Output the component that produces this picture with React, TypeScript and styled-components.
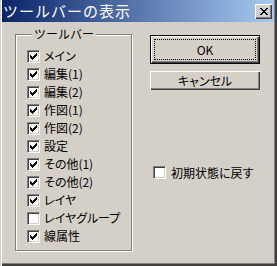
import React from 'react';
import styled, { createGlobalStyle } from 'styled-components';

const GlobalStyle = createGlobalStyle`
  html, body {
    margin: 0;
    padding: 0;
    background: #d4d0c8;
  }
  body {
    font-family: "Noto Sans CJK JP", "Noto Sans", sans-serif;
    font-size: 12px;
    color: #000;
  }
`;

const Window = styled.div`
  width: 277px;
  height: 266px;
  box-sizing: border-box;
  background: #d4d0c8;
  display: flex;
  flex-direction: column;
  box-shadow: inset 1px 0 0 #d4d0c8, inset 2px 0 0 #fff, inset -2px -2px 0 #404040,
    inset -3px -3px 0 #808080;
  overflow: hidden;
`;

const TitleBar = styled.div`
  height: 22px;
  margin: 0 3px 0 2px;
  display: flex;
  align-items: center;
  background: linear-gradient(90deg, #0a246a, #a6caf0);
`;

const TitleText = styled.span`
  flex: 1;
  padding-left: 1px;
  color: #fff;
  font-size: 15px;
  line-height: 22px;
  letter-spacing: 1px;
  white-space: nowrap;
`;

const CloseButton = styled.button`
  width: 17px;
  height: 15px;
  margin-right: 2px;
  padding: 0;
  border: none;
  background: #d4d0c8;
  display: flex;
  align-items: center;
  justify-content: center;
  box-shadow: inset 1px 1px 0 #fff, inset -1px -1px 0 #404040, inset -2px -2px 0 #808080;
`;

const Body = styled.div`
  display: flex;
  align-items: flex-start;
  padding: 5px 0 0 15px;
  gap: 18px;
`;

const Group = styled.fieldset`
  width: 117px;
  box-sizing: border-box;
  margin: 0;
  padding: 6px 0 5px 11px;
  border: 1px solid #808080;
  box-shadow: inset 1px 1px 0 #fff, 1px 1px 0 #fff;
`;

const Legend = styled.legend`
  margin-left: 5px;
  padding: 0 2px;
  line-height: 14px;
  font-size: 12px;
  background: #d4d0c8;
`;

const Row = styled.label<{ $height?: number }>`
  display: flex;
  align-items: center;
  height: ${(p) => p.$height ?? 18}px;
  gap: 4px;
  font-size: 12px;
  line-height: 14px;
  white-space: nowrap;
  font-feature-settings: "palt";
`;

const Box = styled.span`
  width: 13px;
  height: 13px;
  box-sizing: border-box;
  flex-shrink: 0;
  background: #fff;
  border-style: solid;
  border-width: 1px;
  border-color: #808080 #fff #fff #808080;
  box-shadow: inset 1px 1px 0 #404040, inset -1px -1px 0 #d4d0c8;
  display: flex;
  padding: 2px 0 0 2px;
`;

const Side = styled.div`
  width: 110px;
  margin-top: 8px;
  display: flex;
  flex-direction: column;
`;

const Button = styled.button<{ $default?: boolean; $height: number }>`
  position: relative;
  width: 110px;
  height: ${(p) => p.$height}px;
  padding: 0;
  background: #d4d0c8;
  font-family: "Noto Sans CJK JP", "Noto Sans", sans-serif;
  font-size: 12px;
  color: #000;
  font-feature-settings: "palt";
  border: ${(p) => (p.$default ? '1px solid #000' : 'none')};
  box-shadow: inset 1px 1px 0 #fff, inset -1px -1px 0 #404040, inset -2px -2px 0 #808080;

  &::after {
    content: '';
    display: ${(p) => (p.$default ? 'block' : 'none')};
    position: absolute;
    inset: 3px;
    border: 1px dotted #000;
  }
`;

const CancelButton = styled(Button)`
  margin-top: 7px;
`;

const ResetRow = styled(Row)`
  margin: 76px 0 0 3px;
  gap: 5px;
`;

function Check({ on }: { on: boolean }) {
  return (
    <Box>
      {on && (
        <svg width="7" height="7" viewBox="0 0 7 7" shapeRendering="crispEdges">
          <path
            fill="#000"
            d="M6 0h1v1h-1z M5 1h2v1h-2z M0 2h1v1h-1z M4 2h3v1h-3z M0 3h2v1h-2z M3 3h3v1h-3z M0 4h5v1h-5z M1 5h3v1h-3z M2 6h1v1h-1z"
          />
        </svg>
      )}
    </Box>
  );
}

const toolbars = [
  { name: 'メイン', on: true },
  { name: '編集(1)', on: true },
  { name: '編集(2)', on: true },
  { name: '作図(1)', on: true },
  { name: '作図(2)', on: true },
  { name: '設定', on: true },
  { name: 'その他(1)', on: true },
  { name: 'その他(2)', on: true },
  { name: 'レイヤ', on: true },
  { name: 'レイヤグループ', on: false },
  { name: '線属性', on: true },
];

export default function App() {
  return (
    <>
      <GlobalStyle />
      <Window>
        <TitleBar>
          <TitleText>ツールバーの表示</TitleText>
          <CloseButton aria-label="閉じる">
            <svg width="8" height="7" viewBox="0 0 8 7" shapeRendering="crispEdges">
              <path
                fill="#000"
                d="M0 0h2v1h-2z M6 0h2v1h-2z M1 1h2v1h-2z M5 1h2v1h-2z M2 2h4v1h-4z M3 3h2v1h-2z M2 4h4v1h-4z M1 5h2v1h-2z M5 5h2v1h-2z M0 6h2v1h-2z M6 6h2v1h-2z"
              />
            </svg>
          </CloseButton>
        </TitleBar>

        <Body>
          <Group>
            <Legend>ツールバー</Legend>
            {toolbars.map((t) => (
              <Row key={t.name}>
                <Check on={t.on} />
                {t.name}
              </Row>
            ))}
          </Group>

          <Side>
            <Button $default $height={29}>OK</Button>
            <CancelButton $height={19}>キャンセル</CancelButton>
            <ResetRow $height={13}>
              <Check on={false} />
              初期状態に戻す
            </ResetRow>
          </Side>
        </Body>
      </Window>
    </>
  );
}
